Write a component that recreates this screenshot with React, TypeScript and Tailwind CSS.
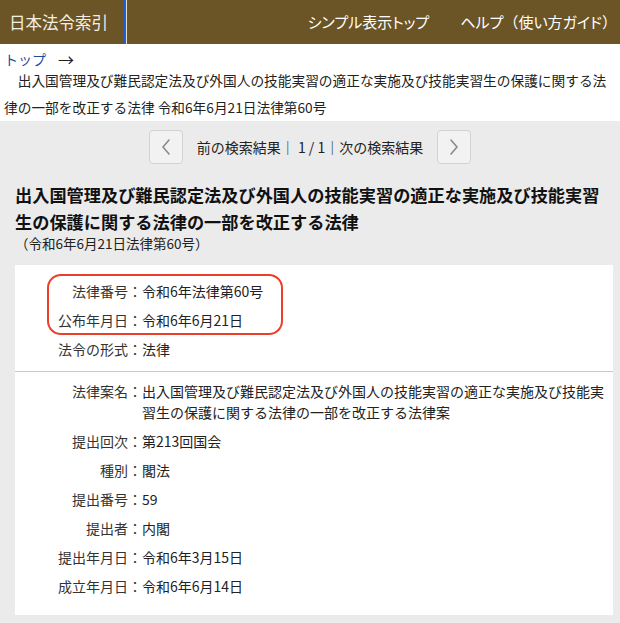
import React from "react";

const font = { fontFamily: '"Noto Sans CJK JP", "Noto Sans", sans-serif' };

type Row = { label: string; value: string };

const rowsA: Row[] = [
  { label: "法律番号：", value: "令和6年法律第60号" },
  { label: "公布年月日：", value: "令和6年6月21日" },
  { label: "法令の形式：", value: "法律" },
];

const rowsB: Row[] = [
  {
    label: "法律案名：",
    value:
      "出入国管理及び難民認定法及び外国人の技能実習の適正な実施及び技能実習生の保護に関する法律の一部を改正する法律案",
  },
  { label: "提出回次：", value: "第213回国会" },
  { label: "種別：", value: "閣法" },
  { label: "提出番号：", value: "59" },
  { label: "提出者：", value: "内閣" },
  { label: "提出年月日：", value: "令和6年3月15日" },
  { label: "成立年月日：", value: "令和6年6月14日" },
];

function InfoRow({ label, value }: Row) {
  return (
    <div className="flex py-[4px] text-[14px] leading-[21px] text-[#222]">
      <div className="w-[127px] shrink-0 text-right text-[#333]">{label}</div>
      <div className="flex-1 pr-[4px]">{value}</div>
    </div>
  );
}

function Chevron({ dir }: { dir: "left" | "right" }) {
  return (
    <svg width="12" height="18" viewBox="0 0 12 18" fill="none">
      {dir === "left" ? (
        <path d="M9 2 L3 9 L9 16" stroke="#8a8a8a" strokeWidth="1.6" strokeLinecap="round" strokeLinejoin="round" />
      ) : (
        <path d="M3 2 L9 9 L3 16" stroke="#8a8a8a" strokeWidth="1.6" strokeLinecap="round" strokeLinejoin="round" />
      )}
    </svg>
  );
}

export default function App() {
  return (
    <div className="w-[620px] min-h-[623px] bg-white" style={font}>
      {/* Header */}
      <div className="flex h-[44px] items-center bg-[#6b5527]">
        <div className="flex h-full w-[124px] items-center pl-[9px] text-[16.5px] text-[#f3eee2]">
          日本法令索引
        </div>
        <div className="h-full w-[2px] bg-[#1d5fd8]" />
        <div className="h-full w-[1px] bg-[#e9dfc4]" />
        <div className="flex flex-1 items-center justify-end gap-[31px] pr-[3px] text-[15px] text-white [font-feature-settings:'palt']">
          <span>シンプル表示トップ</span>
          <span>
            ヘルプ<span className="[font-feature-settings:normal]">（</span>使い方ガイド
            <span className="[font-feature-settings:normal]">）</span>
          </span>
        </div>
      </div>

      {/* Breadcrumb */}
      <div className="px-[4px] pt-[7px] text-[13.7px] text-[#222]">
        <div className="flex h-[16px] items-center text-[14px] leading-[16px]">
          <span className="text-[#1a4d9e]">トップ</span>
          <span className="ml-[12px] text-[16px] leading-[16px]">→</span>
        </div>
        <div className="leading-[27px]">
          {"\u3000"}出入国管理及び難民認定法及び外国人の技能実習の適正な実施及び技能実習生の保護に関する法律の一部を改正する法律 令和6年6月21日法律第60号
        </div>
      </div>

      {/* Gray section */}
      <div className="bg-[#ebebeb] pb-[9px] pl-[15px] pr-[7px] pt-[9px]">
        <div className="flex items-center justify-center pr-[8px]">
          <button className="flex h-[34px] w-[34px] items-center justify-center rounded-[4px] border border-[#d2d2d2] bg-[#f2f2f2]">
            <Chevron dir="left" />
          </button>
          <div className="mx-[14px] text-[14px] text-[#222]">
            前の検索結果｜ 1 / 1｜次の検索結果
          </div>
          <button className="flex h-[34px] w-[34px] items-center justify-center rounded-[4px] border border-[#d2d2d2] bg-[#f2f2f2]">
            <Chevron dir="right" />
          </button>
        </div>

        <h1 className="mt-[17px] text-[17.2px] font-bold leading-[27px] text-[#111]">
          出入国管理及び難民認定法及び外国人の技能実習の適正な実施及び技能実習生の保護に関する法律の一部を改正する法律
        </h1>
        <div className="text-[13.5px] leading-[16px] text-[#222]">（令和6年6月21日法律第60号）</div>

        <div className="mt-[14px] bg-white">
          <div className="relative pb-[7px] pt-[12px]">
            <div className="absolute left-[32px] top-[9px] h-[61px] w-[236px] rounded-[14px] border-2 border-[#ec3f2a]" />
            {rowsA.map((r) => (
              <InfoRow key={r.label} {...r} />
            ))}
          </div>
          <div className="h-px bg-[#c9c9c9]" />
          <div className="pb-[14px] pt-[5px]">
            {rowsB.map((r) => (
              <InfoRow key={r.label} {...r} />
            ))}
          </div>
        </div>
      </div>
    </div>
  );
}
